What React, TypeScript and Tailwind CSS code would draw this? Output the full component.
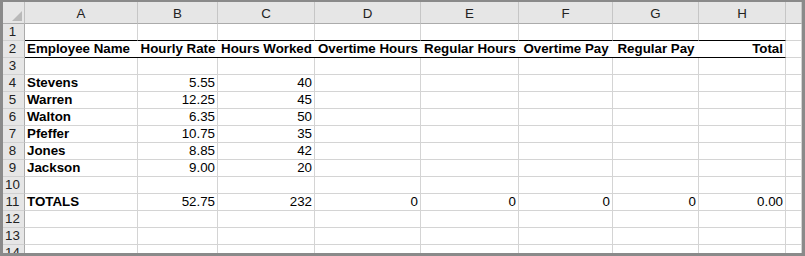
import React from 'react';

type Cell = { v?: string; align?: 'left' | 'center' | 'right'; bold?: boolean };

const letters = ['A', 'B', 'C', 'D', 'E', 'F', 'G', 'H', ''];

const headerRow: Cell[] = [
  { v: 'Employee Name', bold: true },
  { v: 'Hourly Rate', bold: true, align: 'center' },
  { v: 'Hours Worked', bold: true, align: 'center' },
  { v: 'Overtime Hours', bold: true, align: 'center' },
  { v: 'Regular Hours', bold: true, align: 'center' },
  { v: 'Overtime Pay', bold: true, align: 'center' },
  { v: 'Regular Pay', bold: true, align: 'center' },
  { v: 'Total', bold: true, align: 'right' },
];

const employees: [string, string, string][] = [
  ['Stevens', '5.55', '40'],
  ['Warren', '12.25', '45'],
  ['Walton', '6.35', '50'],
  ['Pfeffer', '10.75', '35'],
  ['Jones', '8.85', '42'],
  ['Jackson', '9.00', '20'],
];

const empRow = ([name, rate, hours]: [string, string, string]): Cell[] => [
  { v: name, bold: true },
  { v: rate, align: 'right' },
  { v: hours, align: 'right' },
];

const rows: Cell[][] = [
  [],
  headerRow,
  [],
  ...employees.map(empRow),
  [],
  [
    { v: 'TOTALS', bold: true },
    { v: '52.75', align: 'right' },
    { v: '232', align: 'right' },
    { v: '0', align: 'right' },
    { v: '0', align: 'right' },
    { v: '0', align: 'right' },
    { v: '0', align: 'right' },
    { v: '0.00', align: 'right' },
  ],
  [],
  [],
  [],
];

const alignClass = {
  left: 'justify-start pl-[2px]',
  center: 'justify-center',
  right: 'justify-end pr-[2px]',
};

const App: React.FC = () => {
  return (
    <div className="w-[805px] h-[256px] bg-[#8a8a8a] pt-[2px] pl-[3px] pr-[3px] pb-[3px] font-['Liberation_Sans',Arial,sans-serif] text-[13.33px] text-black">
      <div className="w-full h-full bg-white overflow-hidden">
        <div className="grid grid-cols-[22px_113px_80px_97px_106px_98px_94px_86px_87px_1fr] grid-rows-[22px_repeat(14,17px)]">
          {/* corner cell with the select-all triangle */}
          <div className="relative bg-[#e6e6e6] border-r border-b border-r-[#bfbfbf] border-b-[#ababab]">
            <svg className="absolute right-[2px] bottom-[2px]" width="10" height="10" viewBox="0 0 10 10">
              <polygon points="10,0 10,10 0,10" fill="#b9b9b9" />
            </svg>
          </div>
          {letters.map((l, i) => (
            <div
              key={'h' + i}
              className="flex items-end justify-center pb-[1px] leading-[16px] text-[#222] bg-[#e6e6e6] border-r border-b border-r-[#c6c6c6] border-b-[#ababab]"
            >
              {l}
            </div>
          ))}

          {rows.map((cells, r) => (
            <React.Fragment key={'r' + r}>
              <div className="flex items-start justify-center pr-[2px] leading-[16px] text-[#222] bg-[#e6e6e6] border-r border-b border-r-[#ababab] border-b-[#d0d0d0]">
                {r + 1}
              </div>
              {letters.map((_, c) => {
                const cell = cells[c] || {};
                const inTable = c < 8;
                const blackBottom = inTable && (r === 0 || r === 1);
                const noRight = r === 1 && c < 7;
                return (
                  <div
                    key={c}
                    className={[
                      'flex items-start whitespace-nowrap leading-[16px] border-b',
                      blackBottom ? 'border-b-black' : 'border-b-[#d4d4d4]',
                      noRight ? '' : 'border-r border-r-[#d4d4d4]',
                      alignClass[cell.align || 'left'],
                      cell.bold ? 'font-bold' : '',
                    ].join(' ')}
                  >
                    {cell.v}
                  </div>
                );
              })}
            </React.Fragment>
          ))}
        </div>
      </div>
    </div>
  );
};

export default App;
